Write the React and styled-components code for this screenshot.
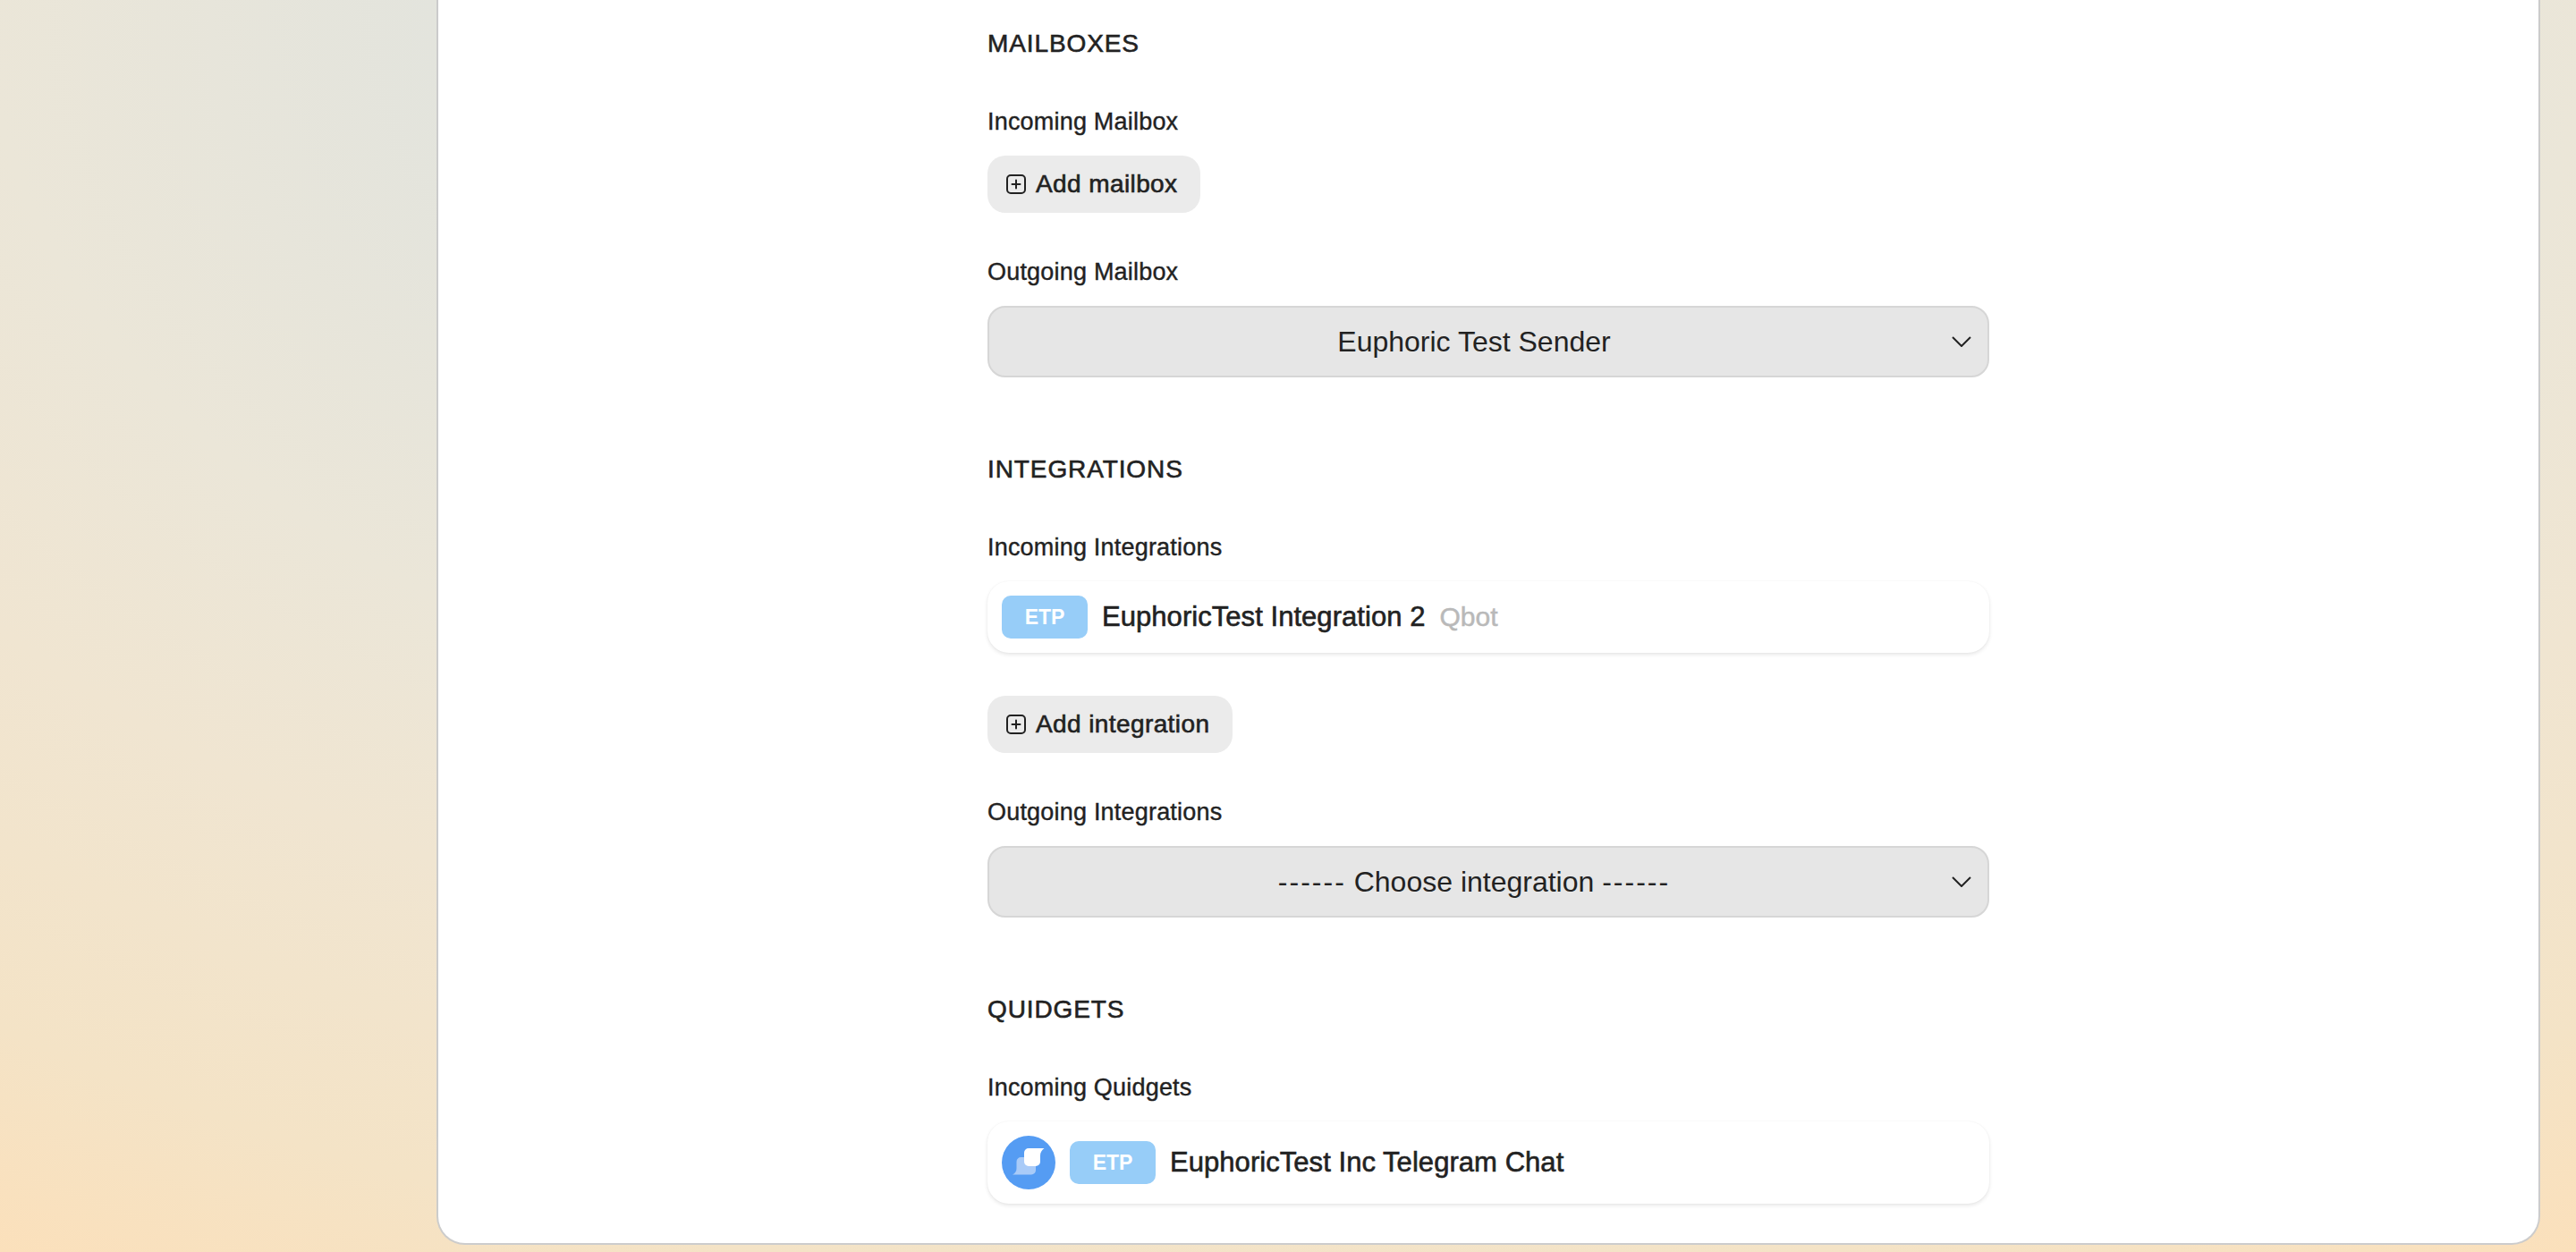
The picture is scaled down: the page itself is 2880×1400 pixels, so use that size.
import React from 'react'
import styled, { createGlobalStyle } from 'styled-components'

const GlobalStyle = createGlobalStyle`
  html, body {
    margin: 0;
    padding: 0;
    height: 1400px;
    overflow: hidden;
  }
  body {
    font-family: "Liberation Sans", Arial, sans-serif;
    color: #222222;
  }
`

const Page = styled.div`
  height: 1400px;
  box-sizing: border-box;
  padding: 0 40px 8px 488px;
  background: radial-gradient(
    ellipse 2800px 1700px at 1440px 0,
    #dbe1e2 0%,
    #e3e4dd 34%,
    #ebe6d8 52%,
    #f0e5d1 66%,
    #f4e3c6 85%,
    #fbe0bb 97%
  );
`

const Card = styled.main`
  height: 1392px;
  box-sizing: border-box;
  background: #ffffff;
  border: 2px solid rgba(0, 0, 0, 0.2);
  border-top: none;
  border-radius: 0 0 32px 32px;
  padding: 32px 0 0 614px;
`

const Column = styled.div`
  width: 1120px;
`

const Section = styled.section`
  margin-bottom: 86px;
`

const Heading = styled.h2`
  margin: 0 0 55px;
  font-size: 28px;
  line-height: 33px;
  font-weight: 400;
  letter-spacing: 0.9px;
  -webkit-text-stroke: 0.6px currentColor;
`

const Label = styled.div`
  margin-bottom: 22px;
  font-size: 27px;
  line-height: 32px;
  letter-spacing: 0.2px;
  -webkit-text-stroke: 0.4px currentColor;
`

const AddButton = styled.button`
  display: flex;
  align-items: center;
  gap: 10px;
  height: 64px;
  padding: 0 26px 0 20px;
  margin-bottom: 50px;
  border: none;
  border-radius: 20px;
  background: #ebebeb;
  color: #222222;
  font-family: inherit;
  font-size: 28px;
  letter-spacing: 0.4px;
  -webkit-text-stroke: 0.6px currentColor;
`

const Select = styled.div`
  position: relative;
  display: flex;
  align-items: center;
  justify-content: center;
  height: 80px;
  box-sizing: border-box;
  padding-right: 32px;
  background: #e6e6e6;
  border: 2px solid #d6d6d6;
  border-radius: 20px;
  font-size: 32px;
  color: #222222;
  white-space: pre;
`

const Dashes = styled.span`
  letter-spacing: 2px;
`

const Chevron = styled.svg`
  position: absolute;
  right: 18px;
  top: 50%;
  margin-top: -6px;
`

const ItemCard = styled.div`
  display: flex;
  align-items: center;
  gap: 16px;
  height: ${p => p.$tall ? 92 : 80}px;
  box-sizing: border-box;
  padding: 0 16px;
  margin-bottom: ${p => p.$mb || 0}px;
  background: #ffffff;
  border-radius: 24px;
  box-shadow: 0 2px 4px rgba(0, 0, 0, 0.1), 0 0 2px rgba(0, 0, 0, 0.04);
`

const Badge = styled.span`
  display: flex;
  align-items: center;
  justify-content: center;
  width: 96px;
  height: 48px;
  border-radius: 10px;
  background: #97cdf8;
  color: #ffffff;
  font-size: 23px;
  font-weight: 700;
`

const ItemName = styled.span`
  font-size: 31px;
  letter-spacing: 0.05px;
  -webkit-text-stroke: 0.6px currentColor;
`

const ItemType = styled.span`
  font-size: 30px;
  color: #b9b9b9;
  -webkit-text-stroke: 0.5px currentColor;
`

const PlusIcon = () => (
  <svg width="24" height="24" viewBox="0 0 24 24" fill="none" stroke="#222222" strokeWidth="2" strokeLinecap="round">
    <rect x="2" y="2" width="20" height="20" rx="4" />
    <path d="M12 7.500v9M7.500 12h9" />
  </svg>
)

const ChevronIcon = () => (
  <Chevron width="22" height="12" viewBox="0 0 22 12" fill="none" stroke="#222222" strokeWidth="2">
    <path d="M1 1l10 10L21 1" />
  </Chevron>
)

const QuidgetLogo = () => (
  <svg width="60" height="60" viewBox="0 0 60 60">
    <circle cx="30" cy="30" r="30" fill="#559cf3" />
    <path d="M12 43.500c3-1.500 4.500-4 4.500-7V29a5 5 0 0 1 5-5H33a5 5 0 0 1 5 5v9.500a5 5 0 0 1-5 5z" fill="#a9cbf8" />
    <path d="M25 19a5 5 0 0 1 5-5h17.500c-3 2-4.500 5-4.500 8v7a5 5 0 0 1-5 5h-8a5 5 0 0 1-5-5z" fill="#ffffff" />
  </svg>
)

export default function App() {
  return (
    <>
      <GlobalStyle />
      <Page>
        <Card>
          <Column>
            <Section>
              <Heading>MAILBOXES</Heading>
              <Label>Incoming Mailbox</Label>
              <AddButton><PlusIcon />Add mailbox</AddButton>
              <Label>Outgoing Mailbox</Label>
              <Select>Euphoric Test Sender<ChevronIcon /></Select>
            </Section>
            <Section>
              <Heading>INTEGRATIONS</Heading>
              <Label>Incoming Integrations</Label>
              <ItemCard $mb={48}>
                <Badge>ETP</Badge>
                <ItemName>EuphoricTest Integration 2</ItemName>
                <ItemType>Qbot</ItemType>
              </ItemCard>
              <AddButton><PlusIcon />Add integration</AddButton>
              <Label>Outgoing Integrations</Label>
              <Select><Dashes>------</Dashes> Choose integration <Dashes>------</Dashes><ChevronIcon /></Select>
            </Section>
            <Section>
              <Heading>QUIDGETS</Heading>
              <Label>Incoming Quidgets</Label>
              <ItemCard $tall>
                <QuidgetLogo />
                <Badge>ETP</Badge>
                <ItemName>EuphoricTest Inc Telegram Chat</ItemName>
              </ItemCard>
            </Section>
          </Column>
        </Card>
      </Page>
    </>
  )
}
